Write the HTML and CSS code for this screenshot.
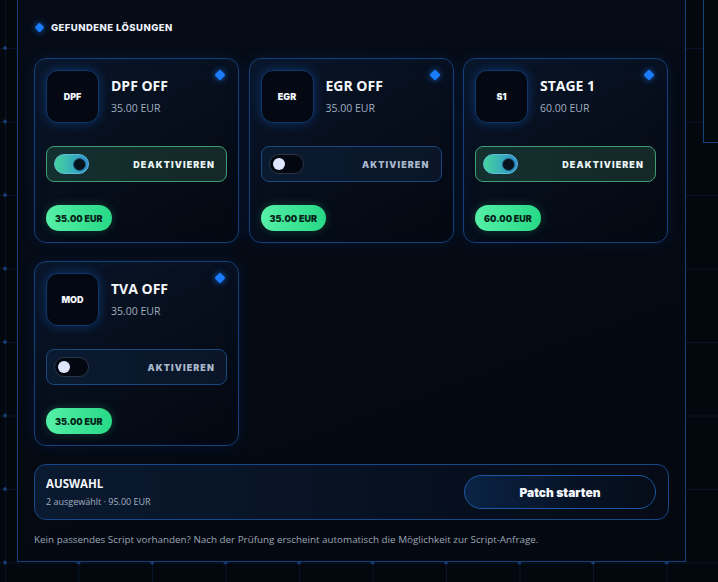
FILE: index.html
```html
<!DOCTYPE html>
<html lang="de">
<head>
<meta charset="utf-8">
<title>Gefundene Lösungen</title>
<link rel="stylesheet" href="styles.css">
</head>
<body>
<div class="stage">
  <section class="panel">
    <h2 class="heading"><span class="dia dia-sm"></span>GEFUNDENE LÖSUNGEN</h2>

    <div class="cards">
      <article class="card">
        <span class="dia dia-card"></span>
        <div class="card-head">
          <div class="icon">DPF</div>
          <div class="meta">
            <div class="title">DPF OFF</div>
            <div class="price">35.00 EUR</div>
          </div>
        </div>
        <div class="toggle-row on">
          <span class="switch"><span class="knob"></span></span>
          <span class="toggle-label">DEAKTIVIEREN</span>
        </div>
        <span class="badge">35.00 EUR</span>
      </article>

      <article class="card">
        <span class="dia dia-card"></span>
        <div class="card-head">
          <div class="icon">EGR</div>
          <div class="meta">
            <div class="title">EGR OFF</div>
            <div class="price">35.00 EUR</div>
          </div>
        </div>
        <div class="toggle-row">
          <span class="switch"><span class="knob"></span></span>
          <span class="toggle-label">AKTIVIEREN</span>
        </div>
        <span class="badge">35.00 EUR</span>
      </article>

      <article class="card">
        <span class="dia dia-card"></span>
        <div class="card-head">
          <div class="icon">S1</div>
          <div class="meta">
            <div class="title">STAGE 1</div>
            <div class="price">60.00 EUR</div>
          </div>
        </div>
        <div class="toggle-row on">
          <span class="switch"><span class="knob"></span></span>
          <span class="toggle-label">DEAKTIVIEREN</span>
        </div>
        <span class="badge">60.00 EUR</span>
      </article>

      <article class="card">
        <span class="dia dia-card"></span>
        <div class="card-head">
          <div class="icon">MOD</div>
          <div class="meta">
            <div class="title">TVA OFF</div>
            <div class="price">35.00 EUR</div>
          </div>
        </div>
        <div class="toggle-row">
          <span class="switch"><span class="knob"></span></span>
          <span class="toggle-label">AKTIVIEREN</span>
        </div>
        <span class="badge">35.00 EUR</span>
      </article>
    </div>

    <div class="summary">
      <div class="sum-text">
        <div class="sum-title">AUSWAHL</div>
        <div class="sum-sub">2 ausgewählt · 95.00 EUR</div>
      </div>
      <button class="start">Patch starten</button>
    </div>

    <p class="note">Kein passendes Script vorhanden? Nach der Prüfung erscheint automatisch die Möglichkeit zur Script-Anfrage.</p>
  </section>
  <aside class="side"></aside>
</div>
</body>
</html>
```

FILE: styles.css
```css
* { box-sizing: border-box; }

html, body {
  margin: 0;
  width: 718px;
  height: 582px;
  overflow: hidden;
}

body {
  font-family: "Open Sans", "Noto Sans", sans-serif;
  color: #e8eef8;
  background-color: #03070e;
  background-image:
    radial-gradient(circle, rgba(40, 100, 190, 0.55) 1.4px, transparent 2.2px),
    linear-gradient(to right, rgba(25, 70, 130, 0.22) 1px, transparent 1px),
    linear-gradient(to bottom, rgba(25, 70, 130, 0.22) 1px, transparent 1px);
  background-size: 73.5px 73.5px;
  background-position: -31.75px 11.25px, 5px 48px, 5px 48px;
}

.stage {
  display: flex;
  align-items: flex-start;
  gap: 17px;
  padding-left: 17px;
}

.panel {
  flex: 0 0 669px;
  height: 562px;
  border: 1px solid #123f78;
  border-top: none;
  background: linear-gradient(160deg, #060c17 0%, #04080f 100%);
  padding: 20px 16px 0 16px;
}

.side {
  flex: 1 0 40px;
  height: 143px;
  border-left: 1px solid #124180;
  border-bottom: 1px solid #124180;
  background: #04090f;
}

.heading {
  margin: 0 0 24px 0;
  height: 14px;
  display: flex;
  align-items: center;
  gap: 8px;
  font-family: "Inter", sans-serif;
  font-weight: 800;
  font-size: 9.5px;
  letter-spacing: 0.45px;
  color: #eef3fb;
}

.dia {
  display: inline-block;
  background: #1a7dff;
  transform: rotate(45deg);
  border-radius: 1.5px;
  box-shadow: 0 0 6px rgba(30, 125, 255, 0.8);
}

.dia-sm {
  width: 7px;
  height: 7px;
  margin-left: 2px;
}

.cards {
  display: grid;
  grid-template-columns: repeat(3, 205px);
  column-gap: 9.5px;
  row-gap: 18px;
}

.card {
  position: relative;
  height: 185px;
  border: 1px solid #133f7a;
  border-radius: 12px;
  padding: 11px;
  background: linear-gradient(150deg, #0a1628 0%, #060d1a 55%, #04080f 100%);
  box-shadow: 0 0 14px rgba(20, 90, 200, 0.16), inset 0 0 18px rgba(20, 80, 180, 0.06);
  display: flex;
  flex-direction: column;
  align-items: flex-start;
}

.dia-card {
  position: absolute;
  top: 12px;
  right: 14px;
  width: 8px;
  height: 8px;
}

.card-head {
  display: flex;
  gap: 12px;
}

.icon {
  width: 53px;
  height: 53px;
  border-radius: 12px;
  border: 1px solid #113766;
  background: #030812;
  box-shadow: 0 0 11px rgba(25, 105, 230, 0.4);
  display: flex;
  align-items: center;
  justify-content: center;
  font-family: "Inter", sans-serif;
  font-weight: 900;
  font-size: 9px;
  color: #f2f6fc;
}

.meta {
  padding-top: 7px;
}

.title {
  font-weight: 700;
  font-size: 14px;
  line-height: 18px;
  color: #f5f8fc;
}

.price {
  margin-top: 6px;
  font-size: 10.5px;
  line-height: 14px;
  color: #9fadbf;
}

.toggle-row {
  margin-top: 23px;
  align-self: stretch;
  height: 36px;
  border: 1px solid #1b477f;
  border-radius: 8px;
  background: linear-gradient(90deg, #0a1a30 0%, #0a1628 100%);
  display: flex;
  align-items: center;
  justify-content: space-between;
  padding: 0 11px 0 7px;
}

.toggle-row.on {
  border-color: #3d9e75;
  background: linear-gradient(90deg, #13302f 0%, #142828 100%);
}

.switch {
  width: 35px;
  height: 20px;
  border-radius: 10px;
  border: 1px solid #2b3546;
  background: #030710;
  display: flex;
  align-items: center;
  padding: 0 3px;
}

.toggle-row.on .switch {
  border-color: #5fb9d8;
  background: linear-gradient(90deg, #44d39c 0%, #2f8fd2 100%);
  justify-content: flex-end;
}

.knob {
  width: 12px;
  height: 12px;
  border-radius: 50%;
  background: #dfe7ff;
}

.toggle-row.on .knob {
  width: 13px;
  height: 13px;
  background: #06121c;
  border: 1px solid #1f5a78;
  margin-right: -1px;
}

.toggle-label {
  font-family: "Inter", sans-serif;
  font-weight: 900;
  font-size: 9px;
  letter-spacing: 1.1px;
  color: #a9b7cb;
}

.toggle-row.on .toggle-label {
  color: #e9f3f1;
}

.badge {
  margin-top: 23px;
  height: 26px;
  border-radius: 13px;
  padding: 0 9px;
  display: inline-flex;
  align-items: center;
  background: linear-gradient(90deg, #55f0a6 0%, #27d986 100%);
  box-shadow: 0 0 10px rgba(50, 220, 140, 0.25);
  font-family: "Inter", sans-serif;
  font-weight: 900;
  font-size: 9px;
  color: #06251a;
}

.summary {
  margin-top: 18px;
  height: 56px;
  border: 1px solid #17488a;
  border-radius: 12px;
  background: linear-gradient(90deg, #0a1a30 0%, #071020 60%, #050b16 100%);
  display: flex;
  align-items: center;
  justify-content: space-between;
  padding: 0 12px 0 11px;
}

.sum-title {
  font-weight: 700;
  font-size: 11.5px;
  line-height: 14px;
  color: #f3f6fb;
}

.sum-sub {
  margin-top: 4px;
  font-size: 9px;
  line-height: 13px;
  color: #a3afc0;
}

.start {
  width: 192px;
  height: 34px;
  border-radius: 17px;
  border: 1px solid #1b57a0;
  background: linear-gradient(90deg, #0b2345 0%, #061224 60%, #050c18 100%);
  font-family: "Inter", sans-serif;
  font-weight: 900;
  font-size: 12px;
  color: #f3f6fb;
  cursor: pointer;
}

.note {
  margin: 12px 0 0 0;
  font-size: 9.85px;
  line-height: 14px;
  color: #9ba6b6;
}
```
